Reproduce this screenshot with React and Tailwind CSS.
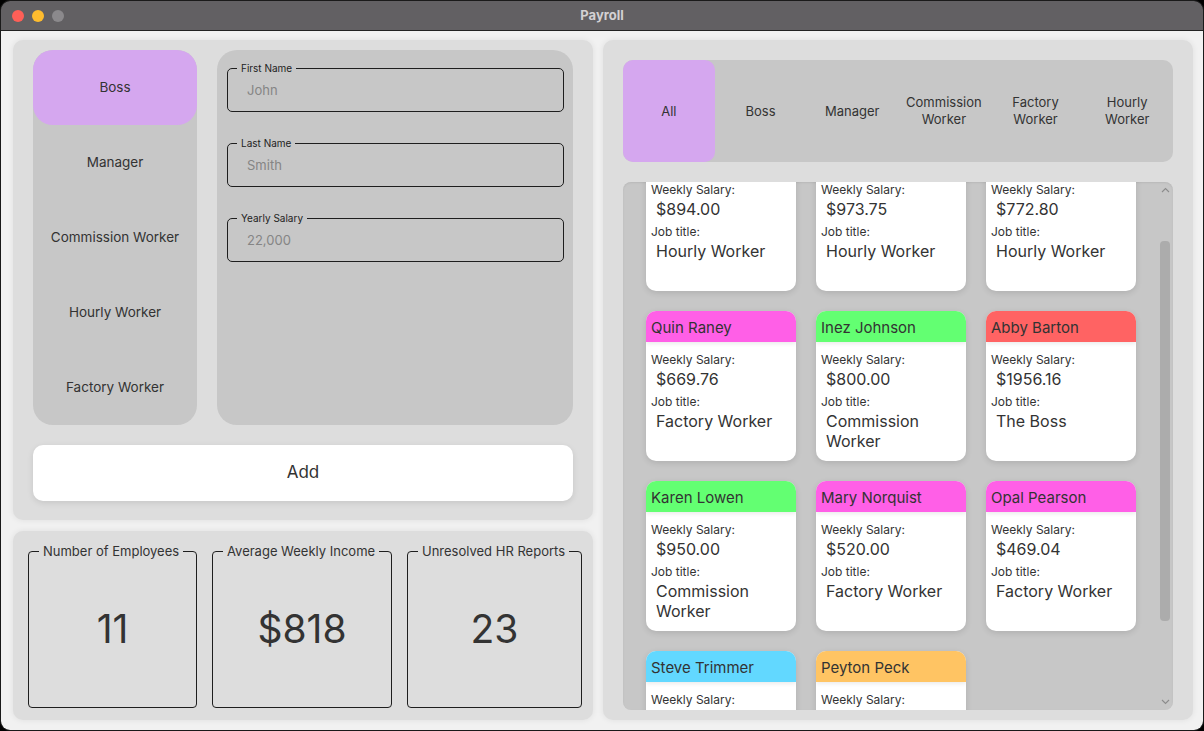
import { useLayoutEffect, useRef } from 'react'

const SIDE_ITEMS = ['Boss', 'Manager', 'Commission Worker', 'Hourly Worker', 'Factory Worker']
const TABS = ['All', 'Boss', 'Manager', 'Commission Worker', 'Factory Worker', 'Hourly Worker']

const FIELDS = [
  { label: 'First Name', placeholder: 'John' },
  { label: 'Last Name', placeholder: 'Smith' },
  { label: 'Yearly Salary', placeholder: '22,000' },
]

const STATS = [
  { label: 'Number of Employees', value: '11', w: 'w-[169px]' },
  { label: 'Average Weekly Income', value: '$818', w: 'w-[180px]' },
  { label: 'Unresolved HR Reports', value: '23', w: 'w-[175px]' },
]

const HEAD = {
  hourly: 'bg-[#62d8ff]',
  factory: 'bg-[#ff5fe7]',
  commission: 'bg-[#63ff72]',
  boss: 'bg-[#ff6363]',
  manager: 'bg-[#ffc463]',
}

const EMPLOYEES = [
  { id: 1, name: 'Lena Whitford', salary: '$894.00', job: 'Hourly Worker', kind: 'hourly' },
  { id: 2, name: 'Tom Ashby', salary: '$973.75', job: 'Hourly Worker', kind: 'hourly' },
  { id: 3, name: 'Ruth Calloway', salary: '$772.80', job: 'Hourly Worker', kind: 'hourly' },
  { id: 4, name: 'Quin Raney', salary: '$669.76', job: 'Factory Worker', kind: 'factory' },
  { id: 5, name: 'Inez Johnson', salary: '$800.00', job: 'Commission Worker', kind: 'commission' },
  { id: 6, name: 'Abby Barton', salary: '$1956.16', job: 'The Boss', kind: 'boss' },
  { id: 7, name: 'Karen Lowen', salary: '$950.00', job: 'Commission Worker', kind: 'commission' },
  { id: 8, name: 'Mary Norquist', salary: '$520.00', job: 'Factory Worker', kind: 'factory' },
  { id: 9, name: 'Opal Pearson', salary: '$469.04', job: 'Factory Worker', kind: 'factory' },
  { id: 10, name: 'Steve Trimmer', salary: '$612.40', job: 'Hourly Worker', kind: 'hourly' },
  { id: 11, name: 'Peyton Peck', salary: '$380.00', job: 'Manager', kind: 'manager' },
]

function EmployeeCard({ e }) {
  return (
    <div className="h-[150px] rounded-[10px] bg-white shadow-[0_2px_6px_rgba(0,0,0,.12)] overflow-hidden flex flex-col">
      <div className={`${HEAD[e.kind]} h-[31px] shrink-0 px-[5px] pt-[3px] flex items-center text-[15px] text-[#333] shadow-[0_2px_4px_rgba(0,0,0,.08)]`}>
        {e.name}
      </div>
      <div className="px-[5px] pt-[11px] text-[#333]">
        <div className="text-[12px] leading-[14px]">Weekly Salary:</div>
        <div className="text-[16px] leading-[20px] pl-[5px] mt-[2px]">{e.salary}</div>
        <div className="text-[12px] leading-[14px] mt-[6px]">Job title:</div>
        <div className="text-[16px] leading-[20px] pl-[5px] mt-[2px]">{e.job}</div>
      </div>
    </div>
  )
}

function Chevron({ up }) {
  return (
    <svg width="9" height="6" viewBox="0 0 9 6" className="text-[#8c8c8c]">
      <path d={up ? 'M1 5 L4.5 1.5 L8 5' : 'M1 1 L4.5 4.5 L8 1'} fill="none" stroke="currentColor" strokeWidth="1.1" />
    </svg>
  )
}

function App() {
  const scrollRef = useRef(null)

  useLayoutEffect(() => {
    if (scrollRef.current) scrollRef.current.scrollTop = 61
  }, [])

  return (
    <div className="w-[1204px] h-[731px] bg-black font-['Inter','Liberation_Sans',sans-serif] text-[#333]">
      <div className="w-full h-full rounded-[10px] overflow-hidden flex flex-col border border-[#1a1a1a]">

        {/* title bar */}
        <div className="h-[30px] shrink-0 bg-[#626063] border-b border-[#222] grid grid-cols-[1fr_auto_1fr] items-center">
          <div className="flex gap-[8px] pl-[11px]">
            <span className="w-[12px] h-[12px] rounded-full bg-[#fe5f57]" />
            <span className="w-[12px] h-[12px] rounded-full bg-[#febc2e]" />
            <span className="w-[12px] h-[12px] rounded-full bg-[#8b898c]" />
          </div>
          <div className="text-[13px] font-bold text-[#d3d1d4]">Payroll</div>
          <div />
        </div>

        {/* body */}
        <div className="flex-1 min-h-0 bg-[#f1f1f1] flex gap-[10px] pl-[12px] pr-[10px] pt-[9px] pb-[10px]">

          {/* left column */}
          <div className="w-[580px] flex flex-col gap-[11px]">
            <div className="h-[480px] shrink-0 rounded-[10px] bg-[#dddddd] shadow-[0_0_6px_rgba(0,0,0,.08)] px-[20px] pt-[10px] flex flex-col gap-[20px]">
              <div className="flex gap-[20px] h-[375px]">
                <div className="w-[164px] rounded-[20px] bg-[#c7c7c7] flex flex-col">
                  {SIDE_ITEMS.map((s, i) => (
                    <div
                      key={s}
                      className={`h-[75px] flex items-center justify-center text-[13.5px] ${i === 0 ? 'bg-[#d5a7ef] rounded-[20px]' : ''}`}
                    >
                      {s}
                    </div>
                  ))}
                </div>
                <div className="flex-1 rounded-[20px] bg-[#c7c7c7] pl-[10px] pr-[9px] pt-[12px] flex flex-col gap-[25px]">
                  {FIELDS.map(f => (
                    <fieldset key={f.label} className="h-[50px] border-[1.5px] border-[#1e1e1e] rounded-[5px] px-[9px]">
                      <legend className="px-[4px] text-[10px] leading-[12px] text-[#222]">{f.label}</legend>
                      <div className="pl-[10px] pt-[7px] text-[13px] text-[#858585]">{f.placeholder}</div>
                    </fieldset>
                  ))}
                </div>
              </div>
              <button className="h-[56px] rounded-[10px] bg-white text-[17px] text-[#333] shadow-[0_2px_6px_rgba(0,0,0,.1)]">
                Add
              </button>
            </div>

            <div className="flex-1 min-h-0 rounded-[10px] bg-[#dddddd] shadow-[0_0_6px_rgba(0,0,0,.08)] pl-[15px] pt-[12px] flex gap-[15px]">
              {STATS.map(s => (
                <fieldset key={s.label} className={`${s.w} h-[165px] border border-[#1e1e1e] rounded-[4px] px-[10px] flex`}>
                  <legend className="px-[4px] text-[13px] leading-[16px] text-[#333]">{s.label}</legend>
                  <div className="flex-1 flex items-center justify-center text-[39px] text-[#333] pb-[8px]">{s.value}</div>
                </fieldset>
              ))}
            </div>
          </div>

          {/* right column */}
          <div className="flex-1 min-h-0 rounded-[10px] bg-[#dddddd] shadow-[0_0_6px_rgba(0,0,0,.08)] px-[20px] pt-[20px] pb-[10px] flex flex-col gap-[20px]">
            <div className="h-[102px] shrink-0 rounded-[10px] bg-[#c7c7c7] flex">
              {TABS.map((t, i) => (
                <div
                  key={t}
                  className={`flex-1 min-w-0 flex items-center justify-center text-center text-[13px] leading-[17px] px-[8px] ${i === 0 ? 'bg-[#d5a7ef] rounded-[10px]' : ''}`}
                >
                  {t}
                </div>
              ))}
            </div>

            <div className="flex-1 min-h-0 rounded-[8px] bg-[#c7c7c7] flex overflow-hidden shadow-[inset_0_1px_2px_rgba(0,0,0,.08)]">
              <div ref={scrollRef} className="flex-1 min-h-0 overflow-hidden">
                <div className="grid grid-cols-[150px_150px_150px] gap-[20px] pl-[23px] pt-[20px] pb-[20px]">
                  {EMPLOYEES.map(e => <EmployeeCard key={e.id} e={e} />)}
                </div>
              </div>
              <div className="w-[17px] shrink-0 flex flex-col items-center">
                <div className="h-[16px] flex items-center justify-center pl-[2px]"><Chevron up /></div>
                <div className="flex-1 w-full flex flex-col items-center">
                  <div className="mt-[43px] h-[380px] w-[10px] rounded-[4px] bg-[#acacac]" />
                </div>
                <div className="h-[16px] flex items-center justify-center pl-[2px]"><Chevron /></div>
              </div>
            </div>
          </div>

        </div>
      </div>
    </div>
  )
}

export default App
